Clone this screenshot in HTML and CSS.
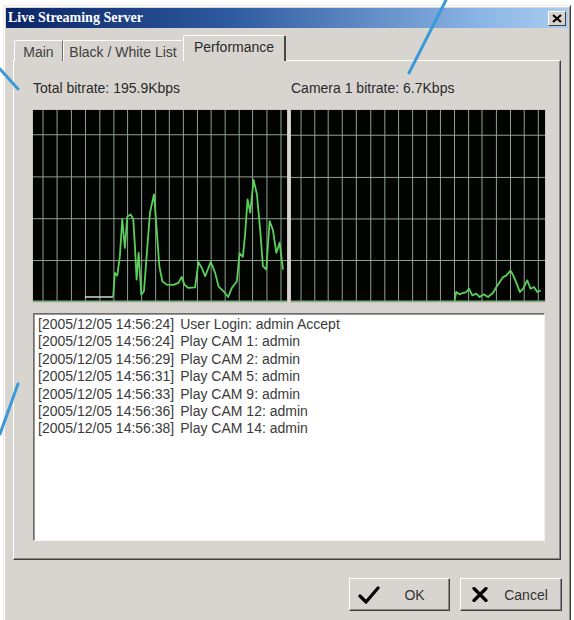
FILE: index.html
```html
<!DOCTYPE html>
<html>
<head>
<meta charset="utf-8">
<link rel="stylesheet" href="styles.css">
</head>
<body>
<div class="window">
  <div class="titlebar">
    <span class="title">Live Streaming Server</span>
    <span class="close-btn">
      <svg width="10" height="9" viewBox="0 0 10 9"><path d="M1 1L9 8M9 1L1 8" stroke="#000" stroke-width="2.2" fill="none"/></svg>
    </span>
  </div>

  <div class="tabs">
    <div class="tab tab-main">Main</div>
    <div class="tab tab-list">Black / White List</div>
    <div class="tab tab-perf active">Performance</div>
  </div>

  <div class="panel">
    <div class="labels">
      <div class="label">Total bitrate: 195.9Kbps</div>
      <div class="label">Camera 1 bitrate: 6.7Kbps</div>
    </div>

    <div class="graphs">
      <div class="graph">
        <svg viewBox="100 33 760 574" preserveAspectRatio="none">
          <path class="grid" d="M130 33V607M172 33V607M215 33V607M257 33V607M300 33V607M342 33V607M383 33V607M425 33V607M467 33V607M508 33V607M550 33V607M592 33V607M633 33V607M675 33V607M717 33V607M757 33V607M800 33V607M842 33V607M100 107H860M100 233H860M100 358H860M100 483H860"/>
          <path class="base" d="M100 605H860"/>
          <path class="flat" d="M255 592H340"/>
          <polyline class="trace" points="340,590 345,520 352,528 360,470 367,360 375,445 382,352 392,345 400,360 405,440 410,540 416,460 424,585 432,575 440,470 450,340 462,285 470,390 478,500 487,545 500,555 520,556 535,550 545,532 553,555 565,565 585,563 595,488 605,505 615,530 632,487 645,520 655,560 670,575 684,592 695,565 710,545 718,462 728,472 735,400 742,300 750,340 760,242 770,285 780,395 788,500 798,510 808,365 818,392 828,460 838,430 848,510"/>
        </svg>
      </div>
      <div class="graph">
        <svg viewBox="37 27 758 578" preserveAspectRatio="none">
          <path class="grid" d="M67 27V605M108 27V605M148 27V605M190 27V605M232 27V605M275 27V605M317 27V605M358 27V605M400 27V605M442 27V605M483 27V605M525 27V605M567 27V605M607 27V605M650 27V605M692 27V605M733 27V605M775 27V605M37 103H795M37 230H795M37 355H795M37 480H795"/>
          <path class="base" d="M37 603H795"/>
          <polyline class="trace" points="525,602 530,575 540,582 550,578 560,575 568,565 578,585 590,580 600,590 612,582 625,590 640,577 650,560 660,545 670,530 680,525 692,510 700,525 710,548 720,575 730,565 742,540 752,565 762,560 772,575 782,570"/>
        </svg>
      </div>
    </div>

    <div class="log">
      <div class="line"><span class="ts">[2005/12/05 14:56:24]</span>User Login: admin Accept</div>
      <div class="line"><span class="ts">[2005/12/05 14:56:24]</span>Play CAM 1: admin</div>
      <div class="line"><span class="ts">[2005/12/05 14:56:29]</span>Play CAM 2: admin</div>
      <div class="line"><span class="ts">[2005/12/05 14:56:31]</span>Play CAM 5: admin</div>
      <div class="line"><span class="ts">[2005/12/05 14:56:33]</span>Play CAM 9: admin</div>
      <div class="line"><span class="ts">[2005/12/05 14:56:36]</span>Play CAM 12: admin</div>
      <div class="line"><span class="ts">[2005/12/05 14:56:38]</span>Play CAM 14: admin</div>
    </div>
  </div>

  <div class="buttons">
    <div class="btn btn-ok">
      <span class="btn-icon">
        <svg width="22" height="18" viewBox="0 0 22 18"><path d="M2 10L8 16L20 2" stroke="#000" stroke-width="3.2" stroke-linecap="round" stroke-linejoin="round" fill="none"/></svg>
      </span>
      <span class="btn-text">OK</span>
    </div>
    <div class="btn btn-cancel">
      <span class="btn-icon">
        <svg width="16" height="15" viewBox="0 0 16 15"><path d="M2 1.5L14 13.5M14 1.5L2 13.5" stroke="#000" stroke-width="3.2" stroke-linecap="round" fill="none"/></svg>
      </span>
      <span class="btn-text">Cancel</span>
    </div>
  </div>
</div>

<svg class="callouts" width="574" height="620" viewBox="0 0 574 620">
  <path d="M0 69L18 89M446 0L409 73M18 384L0 434" stroke="#3a9ad8" stroke-width="3" stroke-linecap="round" fill="none"/>
</svg>
</body>
</html>
```

FILE: styles.css
```css
html, body {
  margin: 0;
  padding: 0;
  background: #ffffff;
}

body {
  width: 574px;
  height: 620px;
  overflow: hidden;
  position: relative;
  font-family: "Liberation Sans", Arial, sans-serif;
  font-size: 14px;
  color: #2a2a2a;
}

.window {
  margin: 5px 0 0 3px;
  width: 568px;
  height: 620px;
  box-sizing: border-box;
  background: #d8d5d0;
  border: 1px solid;
  border-color: #ecebe8 #404040 #404040 #ecebe8;
  box-shadow: inset 1px 1px #ffffff, inset -1px -1px #8a8884;
  padding: 2px;
}

.titlebar {
  height: 20px;
  display: flex;
  align-items: center;
  justify-content: space-between;
  background: linear-gradient(to right, #0b2566 0%, #2e5aa0 40%, #8cb6e6 85%, #a9cdf2 100%);
  padding: 0 2px 0 2px;
}

.title {
  font-family: "Liberation Serif", "Times New Roman", serif;
  font-weight: bold;
  font-size: 14px;
  color: #ffffff;
}

.close-btn {
  width: 18px;
  height: 15px;
  box-sizing: border-box;
  background: #d6d3ce;
  border: 1px solid;
  border-color: #ffffff #404040 #404040 #ffffff;
  display: flex;
  align-items: center;
  justify-content: center;
}

.tabs {
  display: flex;
  align-items: flex-end;
  height: 26px;
  margin-top: 7px;
  padding-left: 8px;
  position: relative;
  z-index: 1;
  margin-bottom: -1px;
}

.tab {
  height: 21px;
  box-sizing: border-box;
  background: #d8d5d0;
  border-top: 1px solid #ffffff;
  border-left: 1px solid #ffffff;
  border-right: 1px solid #6a6866;
  text-align: center;
  line-height: 20px;
  padding-top: 1px;
  color: #404040;
  border-radius: 2px 2px 0 0;
}

.tab-main { width: 49px; }
.tab-list { width: 120px; border-right-color: transparent; }
.tab-perf { width: 103px; }

.tab.active {
  height: 26px;
  line-height: 22px;
  padding-top: 0;
  border-right: 2px solid #4a4846;
  color: #2a2a2a;
}

.panel {
  margin: 0 7px;
  height: 500px;
  box-sizing: border-box;
  border: 1px solid;
  border-color: #ffffff #404040 #404040 #ffffff;
  box-shadow: inset -1px -1px #8a8884;
  padding: 19px 15px 0 19px;
}

.labels {
  display: grid;
  grid-template-columns: 254px 254px;
  column-gap: 4px;
  height: 16px;
  line-height: 16px;
}

.label {
  white-space: nowrap;
  color: #2a2a2a;
}

.graphs {
  display: grid;
  grid-template-columns: 254px 254px;
  column-gap: 4px;
  margin-top: 14px;
  height: 192px;
}

.graph {
  background: #020402;
  height: 192px;
  box-shadow: 0 0 0 1px #c9c6c0;
}

.graph svg {
  display: block;
  width: 100%;
  height: 100%;
}

.grid {
  stroke: #93a193;
  stroke-width: 1;
  fill: none;
  vector-effect: non-scaling-stroke;
}

.base {
  stroke: #7fb27f;
  stroke-width: 1.5;
  fill: none;
  vector-effect: non-scaling-stroke;
}

.flat {
  stroke: #d0dcd0;
  stroke-width: 1.5;
  fill: none;
  vector-effect: non-scaling-stroke;
}

.trace {
  stroke: #5ad05a;
  stroke-width: 1.8;
  fill: none;
  stroke-linejoin: round;
  vector-effect: non-scaling-stroke;
}

.log {
  margin-top: 11px;
  width: 512px;
  height: 228px;
  box-sizing: border-box;
  background: #ffffff;
  border: 1px solid;
  border-color: #6e6c68 #f4f3f1 #f4f3f1 #6e6c68;
  box-shadow: inset 1px 1px #9a9894;
  padding: 2px 0 0 4px;
  color: #3a3a3a;
  line-height: 17.4px;
}

.line {
  white-space: nowrap;
}

.ts {
  margin-right: 6px;
}

.buttons {
  display: flex;
  justify-content: flex-end;
  gap: 10px;
  margin-top: 18px;
  padding-right: 6px;
}

.btn {
  height: 33px;
  box-sizing: border-box;
  display: flex;
  align-items: center;
  background: #d8d5d0;
  border: 1px solid;
  border-color: #ffffff #404040 #404040 #ffffff;
  box-shadow: inset -1px -1px #8a8884;
  color: #333333;
}

.btn-ok { width: 101px; }
.btn-cancel { width: 102px; }

.btn-icon {
  width: 22px;
  margin-left: 8px;
  display: flex;
  align-items: center;
  justify-content: center;
}

.btn-icon svg {
  display: block;
}

.btn-text {
  flex: 1;
  text-align: center;
}

.callouts {
  position: absolute;
  left: 0;
  top: 0;
  pointer-events: none;
}
```
